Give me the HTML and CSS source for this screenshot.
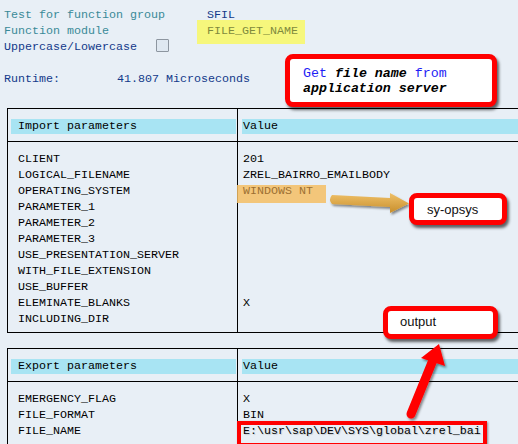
FILE: index.html
```html
<!DOCTYPE html>
<html>
<head>
<meta charset="utf-8">
<link rel="stylesheet" href="styles.css">
</head>
<body>
<div class="page">
  <div class="head">
    <div class="row"><span class="lbl teal">Test for function group</span><span class="navy">SFIL</span></div>
    <div class="row"><span class="lbl teal">Function module</span><span class="hl-yellow">FILE_GET_NAME</span></div>
    <div class="row"><span class="navy">Uppercase/Lowercase</span><span class="checkbox"></span></div>
    <div class="row runtime"><span class="rt-lbl navy">Runtime:</span><span class="navy">41.807 Microseconds</span></div>
  </div>

  <section class="ptable">
    <div class="hcell c1"><span class="bar bar1">Import parameters</span></div>
    <div class="hcell"><span class="bar bar2">Value</span></div>
    <div class="names c1">
      <div>CLIENT</div>
      <div>LOGICAL_FILENAME</div>
      <div>OPERATING_SYSTEM</div>
      <div>PARAMETER_1</div>
      <div>PARAMETER_2</div>
      <div>PARAMETER_3</div>
      <div>USE_PRESENTATION_SERVER</div>
      <div>WITH_FILE_EXTENSION</div>
      <div>USE_BUFFER</div>
      <div>ELEMINATE_BLANKS</div>
      <div>INCLUDING_DIR</div>
    </div>
    <div class="vals">
      <div>201</div>
      <div>ZREL_BAIRRO_EMAILBODY</div>
      <div><span class="hl-orange">WINDOWS NT</span></div>
      <div></div>
      <div></div>
      <div></div>
      <div></div>
      <div></div>
      <div></div>
      <div>X</div>
      <div></div>
    </div>
  </section>

  <section class="ptable second">
    <div class="hcell c1"><span class="bar bar1">Export parameters</span></div>
    <div class="hcell"><span class="bar bar2">Value</span></div>
    <div class="names c1">
      <div>EMERGENCY_FLAG</div>
      <div>FILE_FORMAT</div>
      <div>FILE_NAME</div>
    </div>
    <div class="vals">
      <div>X</div>
      <div>BIN</div>
      <div><span class="fn">E:\usr\sap\DEV\SYS\global\zrel_bai</span></div>
    </div>
  </section>

  <svg class="arrows" width="518" height="444" viewBox="0 0 518 444">
    <defs>
      <linearGradient id="gold" x1="0" y1="0" x2="0" y2="1">
        <stop offset="0" stop-color="#efc068"/>
        <stop offset="1" stop-color="#c88e2b"/>
      </linearGradient>
      <filter id="sh" x="-20%" y="-20%" width="140%" height="140%">
        <feDropShadow dx="1.5" dy="2" stdDeviation="1.2" flood-color="#000" flood-opacity="0.45"/>
      </filter>
    </defs>
    <path d="M332 195 L390 198 L390 193 L409 203.5 L390 213 L390 207 L332 204 Q328 199.5 332 195 Z" fill="url(#gold)" filter="url(#sh)"/>
    <g filter="url(#sh)">
      <line x1="411" y1="414" x2="433" y2="360" stroke="#ff0000" stroke-width="9" stroke-linecap="round"/>
      <polygon points="439,344 421,358 445,366" fill="#ff0000"/>
    </g>
  </svg>

  <div class="callout c-get">
    <span class="blue">Get</span> <b><i>file name</i></b> <span class="blue">from</span><br>
    <b><i>application server</i></b>
  </div>
  <div class="callout c-sys">sy-opsys</div>
  <div class="callout c-out">output</div>
</div>
</body>
</html>
```

FILE: styles.css
```css
* { box-sizing: border-box; }
html, body { margin: 0; height: 100%; }
body {
  background: #e8eff6;
  font-family: "Liberation Mono", "DejaVu Sans Mono", monospace;
  font-size: 11.67px;
  line-height: 16px;
  color: #000;
  overflow: hidden;
}
.page { position: relative; width: 518px; height: 444px; overflow: hidden; }

.head { padding: 7px 0 0 4px; }
.row { display: flex; height: 16px; }
.lbl { width: 203px; }
.rt-lbl { width: 113px; }
.teal { color: #3a8a98; }
.navy { color: #12398a; }
.hl-yellow {
  background: #f6f77c;
  color: #7f8a3c;
  padding: 3px 7px 5px 10px;
  margin: -3px 0 -5px -10px;
}
.checkbox {
  align-self: flex-start;
  width: 13px; height: 13px;
  margin: 0 0 0 19px;
  border: 1px solid #8d96a0;
  border-radius: 1px;
  background: #dfe8f1;
}
.runtime { margin-top: 16px; }

.ptable {
  margin: 21px 0 0 7px;
  border-top: 1px solid #000;
  border-bottom: 1px solid #000;
  border-left: 1px solid #000;
  display: grid;
  grid-template-columns: 230px 1fr;
}
.ptable.second { margin-top: 15px; }
.hcell { padding: 10px 0 7px; border-bottom: 1px solid #000; }
.c1 { border-right: 1px solid #000; }
.bar { display: block; height: 15px; line-height: 15px; background: #a8e4f3; }
.bar1 { margin: 0 1px 0 3px; padding-left: 7px; }
.bar2 { margin-left: 4px; padding-left: 1px; }
.names { padding: 9px 0 5px 10px; }
.vals { padding: 9px 0 5px 5px; }
.names > div, .vals > div { height: 16px; white-space: nowrap; }

.hl-orange { position: relative; z-index: 0; color: #9c7032; }
.hl-orange::before {
  content: "";
  position: absolute;
  left: -6px; right: -13px; top: 1px; bottom: -5px;
  background: rgba(245, 190, 100, 0.85);
  z-index: -1;
}
.fn { position: relative; text-shadow: 1px 1px 1px rgba(0,0,0,0.15); }
.fn::after {
  content: "";
  position: absolute;
  left: -6px; right: -6px; top: -3px; bottom: -9px;
  border: 4px solid #ff0000;
  box-shadow: 1px 1px 2px rgba(0,0,0,0.4);
}

.arrows { position: absolute; left: 0; top: 0; pointer-events: none; }

.callout {
  position: absolute;
  background: #fff;
  border: 5px solid #ff0000;
  border-radius: 8px;
  box-shadow: 2px 3px 3px rgba(0,0,0,0.6);
  white-space: nowrap;
}
.c-get {
  left: 285px; top: 54px; width: 212px; height: 53px;
  padding: 7px 0 0 13px;
  font-size: 13.3px; line-height: 15px;
}
.c-get .blue { color: #1e1ef5; }
.c-sys, .c-out {
  font-family: "Liberation Sans", Arial, sans-serif;
  font-size: 13px;
  color: #111;
}
.c-sys { left: 409px; top: 193px; width: 98px; height: 32px; padding-left: 13px; line-height: 23px; }
.c-out { left: 383px; top: 306px; width: 115px; height: 33px; padding-left: 12px; line-height: 22px; }
```
